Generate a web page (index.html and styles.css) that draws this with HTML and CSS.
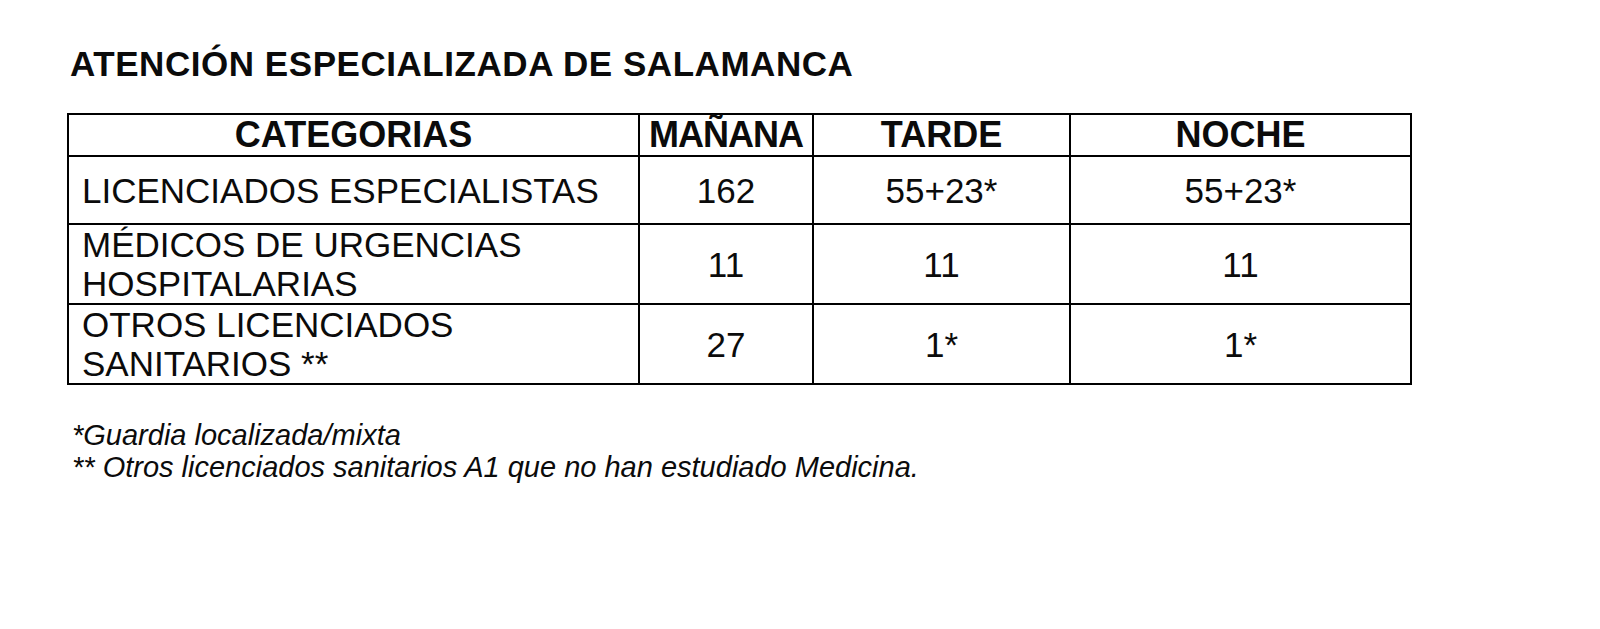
FILE: index.html
```
<!DOCTYPE html>
<html lang="es">
<head>
<meta charset="utf-8">
<title>Atención Especializada de Salamanca</title>
<link rel="stylesheet" href="styles.css">
</head>
<body>
<main class="page">
  <h1 class="title">ATENCIÓN ESPECIALIZADA DE SALAMANCA</h1>
  <table class="grid">
    <colgroup>
      <col class="col-cat">
      <col class="col-m">
      <col class="col-t">
      <col class="col-n">
    </colgroup>
    <thead>
      <tr class="row-head">
        <th>CATEGORIAS</th>
        <th class="tight">MAÑANA</th>
        <th>TARDE</th>
        <th>NOCHE</th>
      </tr>
    </thead>
    <tbody>
      <tr class="row-1">
        <td class="cat">LICENCIADOS ESPECIALISTAS</td>
        <td>162</td>
        <td>55+23*</td>
        <td>55+23*</td>
      </tr>
      <tr class="row-2">
        <td class="cat">MÉDICOS DE URGENCIAS HOSPITALARIAS</td>
        <td>11</td>
        <td>11</td>
        <td>11</td>
      </tr>
      <tr class="row-3">
        <td class="cat">OTROS LICENCIADOS SANITARIOS **</td>
        <td>27</td>
        <td>1*</td>
        <td>1*</td>
      </tr>
    </tbody>
  </table>
  <div class="notes">
    <p>*Guardia localizada/mixta</p>
    <p>** Otros licenciados sanitarios A1 que no han estudiado Medicina.</p>
  </div>
</main>
</body>
</html>
```
FILE: styles.css
```
html, body {
  margin: 0;
  background: #ffffff;
}

body {
  font-family: "Liberation Sans", Arial, sans-serif;
  color: #0b0b0b;
}

.page {
  padding: 44px 0 0 67px;
}

.title {
  margin: 0 0 30px 3px;
  font-size: 35px;
  line-height: 39px;
  font-weight: 700;
  letter-spacing: 0.55px;
}

.grid {
  border-collapse: separate;
  border-spacing: 0;
  table-layout: fixed;
  width: 1345px;
  border-left: 2px solid #000;
  border-top: 2px solid #000;
}

.col-cat { width: 571px; }
.col-m { width: 174px; }
.col-t { width: 257px; }
.col-n { width: 341px; }

.grid th,
.grid td {
  box-sizing: border-box;
  border-right: 2px solid #000;
  border-bottom: 2px solid #000;
  padding: 0 4px;
  text-align: center;
  vertical-align: middle;
}

.grid th {
  font-size: 36px;
  line-height: 40px;
  font-weight: 700;
  white-space: nowrap;
}

.grid th.tight {
  padding: 0;
  letter-spacing: -1px;
}

.grid td {
  font-size: 35px;
  line-height: 39px;
  font-weight: 400;
}

.grid td.cat {
  text-align: left;
  padding-left: 13px;
  padding-right: 30px;
}

.row-head { height: 42px; }
.row-1 { height: 68px; }
.row-2 { height: 80px; }
.row-3 { height: 79px; }

.notes {
  margin-top: 34px;
  padding-left: 5px;
  font-style: italic;
  font-size: 29px;
  line-height: 32px;
}

.notes p {
  margin: 0;
}
```
